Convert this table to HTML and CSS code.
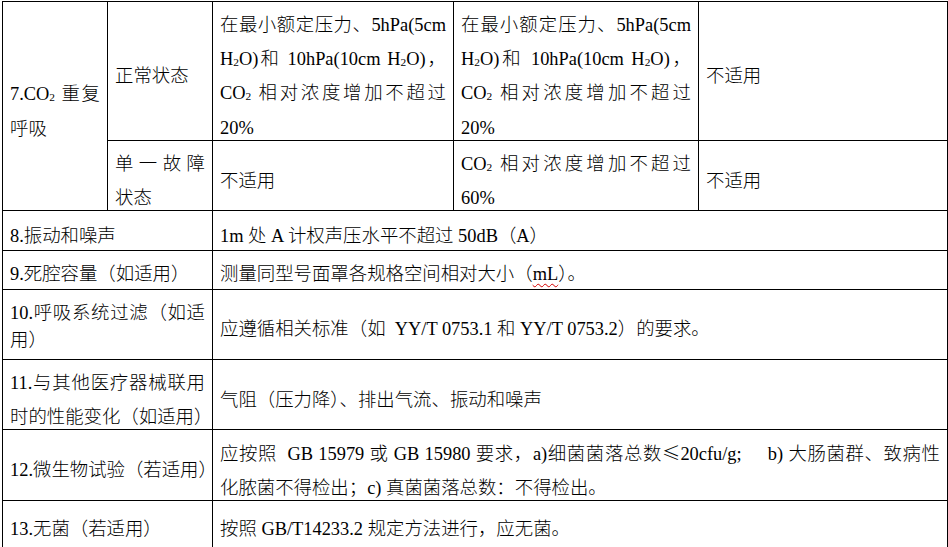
FILE: index.html
```html
<!DOCTYPE html>
<html lang="zh-CN">
<head>
<meta charset="utf-8">
<title>表格</title>
<link rel="stylesheet" href="styles.css">
</head>
<body>
<table class="spec">
  <colgroup>
    <col class="c1"><col class="c2"><col class="c3"><col class="c4"><col class="c5">
  </colgroup>
  <tbody>
    <tr class="r7a">
      <td rowspan="2"><div class="ln j n1">7.CO<sub>2</sub> 重复</div><div class="ln n1">呼吸</div></td>
      <td><div class="ln">正常状态</div></td>
      <td>
        <div class="ln w j">在最小额定压力、5hPa(5cm</div>
        <div class="ln w j">H<sub>2</sub>O)和 10hPa(10cm H<sub>2</sub>O)，</div>
        <div class="ln w j">CO<sub>2</sub> 相对浓度增加不超过</div>
        <div class="ln w">20%</div>
      </td>
      <td>
        <div class="ln w j">在最小额定压力、5hPa(5cm</div>
        <div class="ln w j">H<sub>2</sub>O)和 10hPa(10cm H<sub>2</sub>O)，</div>
        <div class="ln w j">CO<sub>2</sub> 相对浓度增加不超过</div>
        <div class="ln w">20%</div>
      </td>
      <td><div class="ln">不适用</div></td>
    </tr>
    <tr class="r7b">
      <td><div class="ln j">单一故障</div><div class="ln">状态</div></td>
      <td><div class="ln">不适用</div></td>
      <td><div class="ln j">CO<sub>2</sub> 相对浓度增加不超过</div><div class="ln">60%</div></td>
      <td><div class="ln">不适用</div></td>
    </tr>
    <tr class="r8">
      <td colspan="2"><div class="ln">8.振动和噪声</div></td>
      <td colspan="3"><div class="ln">1m 处 A 计权声压水平不超过 50dB（A）</div></td>
    </tr>
    <tr class="r9">
      <td colspan="2"><div class="ln s">9.死腔容量（如适用）</div></td>
      <td colspan="3"><div class="ln s">测量同型号面罩各规格空间相对大小（<span class="spell">mL</span>）。</div></td>
    </tr>
    <tr class="r10">
      <td colspan="2"><div class="ln j t">10.呼吸系统过滤（如适</div><div class="ln t">用）</div></td>
      <td colspan="3"><div class="ln s">应遵循相关标准（如&nbsp; YY/T 0753.1 和 YY/T 0753.2）的要求。</div></td>
    </tr>
    <tr class="r11">
      <td colspan="2"><div class="ln j">11.与其他医疗器械联用</div><div class="ln">时的性能变化（如适用）</div></td>
      <td colspan="3"><div class="ln">气阻（压力降）、排出气流、振动和噪声</div></td>
    </tr>
    <tr class="r12">
      <td colspan="2"><div class="ln">12.微生物试验（若适用）</div></td>
      <td colspan="3"><div class="ln j">应按照&nbsp; GB 15979 或 GB 15980 要求，a)细菌菌落总数<span class="sym">≤</span>20cfu/g;&nbsp;&nbsp;&nbsp;&nbsp; b) 大肠菌群、致病性</div><div class="ln">化脓菌不得检出；c) 真菌菌落总数：不得检出。</div></td>
    </tr>
    <tr class="r13">
      <td colspan="2"><div class="ln">13.无菌（若适用）</div></td>
      <td colspan="3"><div class="ln">按照 GB/T14233.2 规定方法进行，应无菌。</div></td>
    </tr>
  </tbody>
</table>
</body>
</html>
```

FILE: styles.css
```css
html, body {
  background: #ffffff;
}
body {
  margin: 0;
  padding: 1px 0 0 2px;
  font-family: "Liberation Serif", "Noto Sans CJK SC", serif;
  font-size: 18.4px;
  font-weight: 300;
  color: #000000;
}
.spec {
  border-collapse: collapse;
  table-layout: fixed;
  width: 945px;
}
.c1 { width: 105px; }
.c2 { width: 105px; }
.c3 { width: 241px; }
.c4 { width: 245px; }
.c5 { width: 249px; }
.spec td {
  border: 1px solid #000000;
  padding: 0 7px;
  vertical-align: middle;
}
.r7a { height: 139px; }
.r7b { height: 70px; }
.r8 { height: 40px; }
.r9 { height: 39px; }
.r10 { height: 70px; }
.r11 { height: 70px; }
.r12 { height: 69px; }
.r13 { height: 47px; }

.ln {
  line-height: 24px;
  padding-top: 10px;
  white-space: nowrap;
}
.ln.j {
  white-space: normal;
  text-align: justify;
  text-align-last: justify;
}
.ln.w { padding-top: 10.4px; }
.ln.t { padding-top: 3px; }
.ln.s { padding-top: 8px; }
.ln.n1 { padding-top: 11px; }

sub {
  font-size: 0.62em;
  line-height: 0;
  vertical-align: -0.12em;
}
.sym {
  font-family: "Noto Sans CJK SC", sans-serif;
}
.spell {
  text-decoration: underline wavy #d40000;
  text-decoration-thickness: 1px;
  text-underline-offset: 3px;
}
```
